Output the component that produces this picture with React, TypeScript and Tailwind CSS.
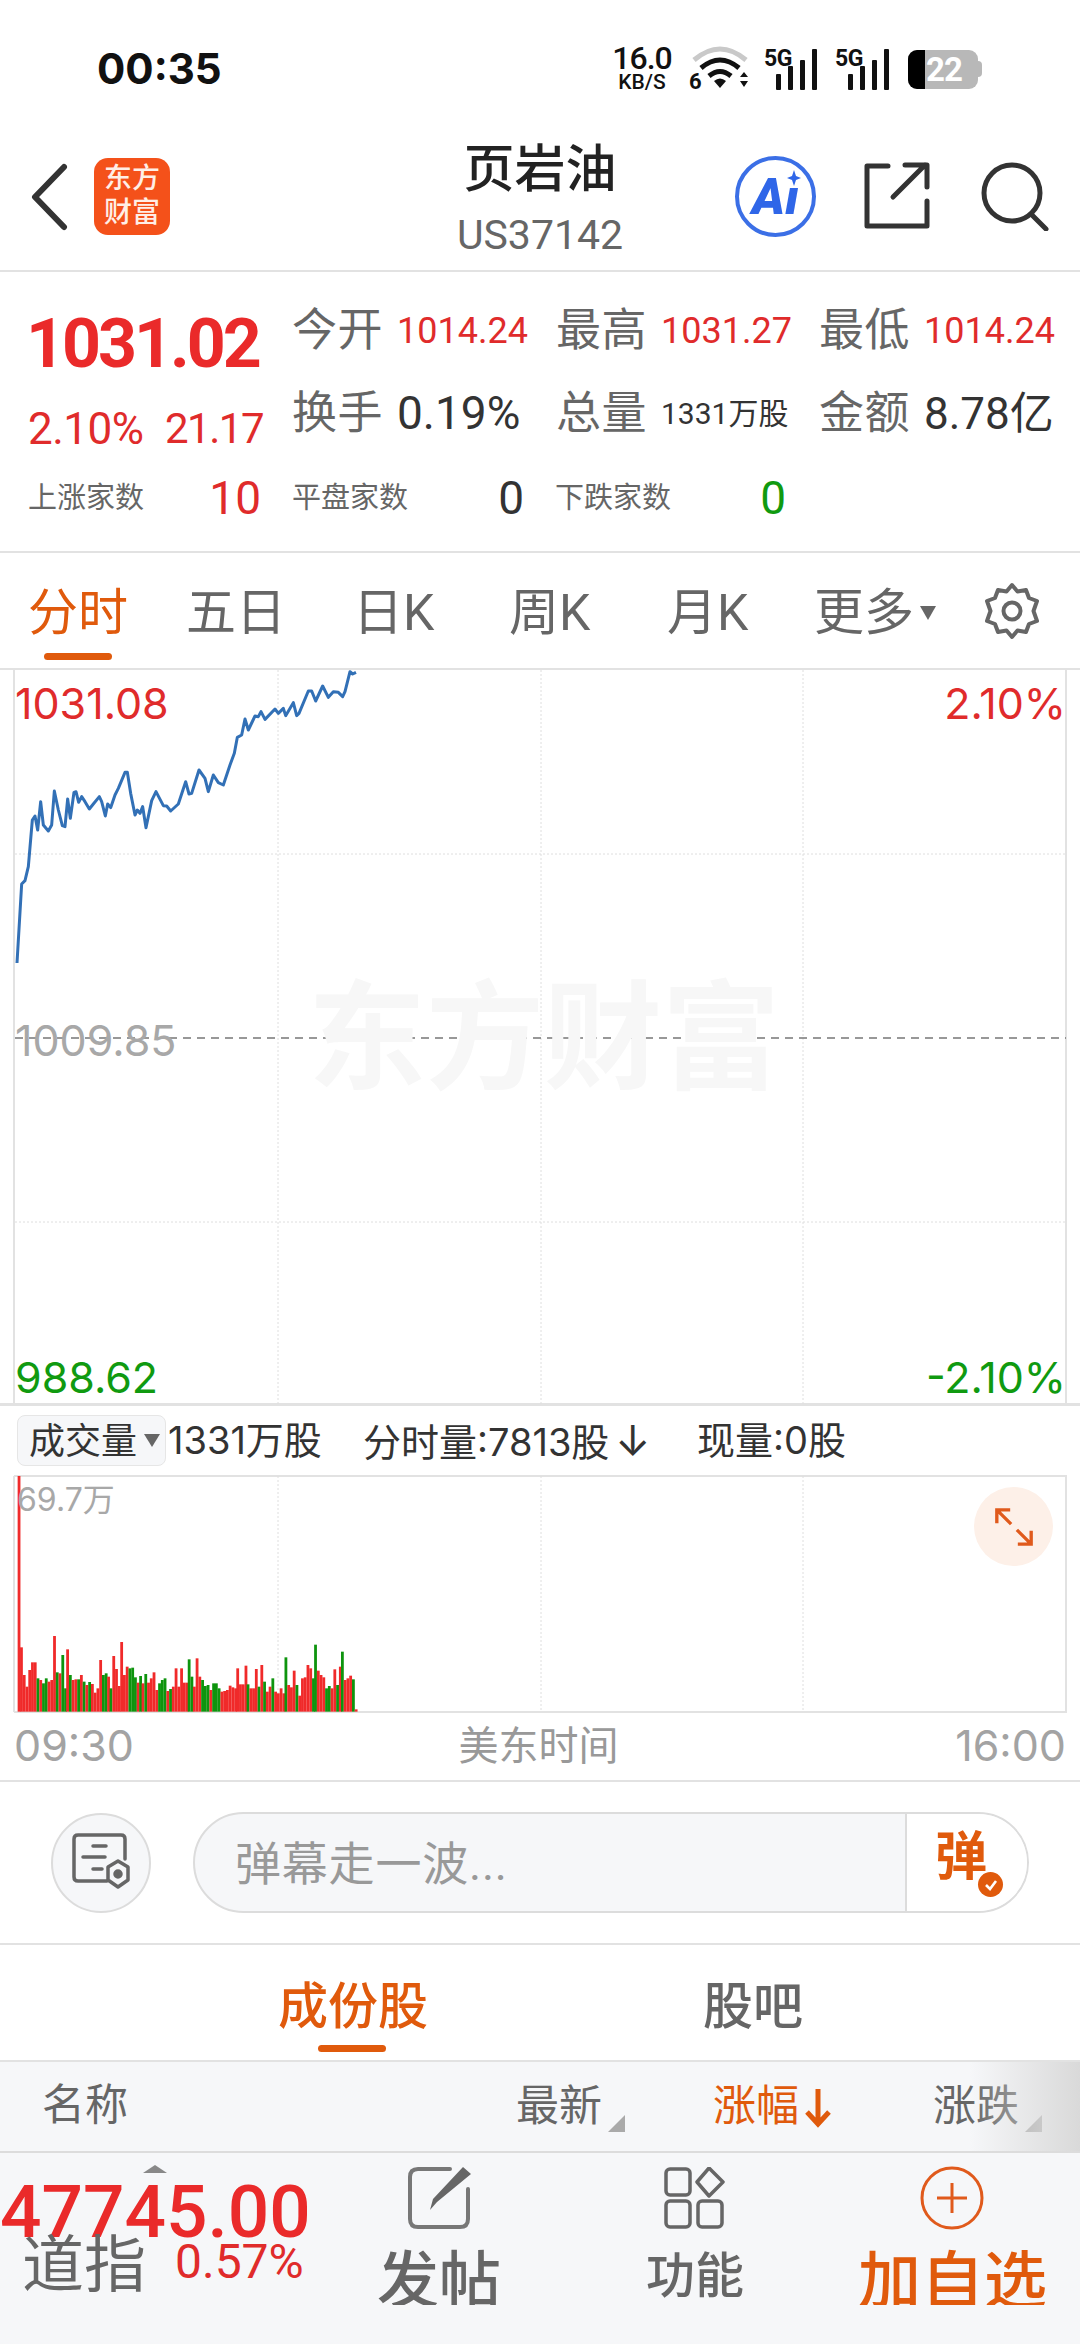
import React from 'react';

const cjk = { fontFamily: 'Roboto, "Noto Sans CJK SC", sans-serif' };
const interCjk = { fontFamily: 'Inter, "Noto Sans CJK SC", sans-serif' };

const linePts = [[50,905],[65,702],[75,692],[85,650],[97,510],[105,498],[113,540],[122,455],[130,525],[145,543],[155,525],[163,423],[175,480],[187,527],[195,530],[203,447],[211,505],[222,427],[228,425],[236,457],[245,440],[255,455],[268,477],[280,462],[298,440],[305,455],[316,498],[323,462],[332,473],[345,435],[355,415],[375,367],[382,367],[392,430],[405,495],[412,480],[420,490],[428,470],[438,533],[455,452],[468,425],[490,467],[500,468],[512,483],[535,462],[557,395],[567,432],[575,430],[597,360],[615,385],[625,425],[640,375],[655,398],[670,405],[690,345],[703,310],[712,262],[725,255],[735,207],[745,240],[765,198],[775,200],[783,185],[795,208],[825,177],[835,190],[850,175],[857,197],[880,158],[890,197],[897,190],[925,123],[935,123],[947,153],[968,108],[985,142],[1000,125],[1015,127],[1028,140],[1035,125],[1050,65],[1058,72],[1068,67]];
const linePath = [[17,963], ...linePts.slice(1).map(([x, y]) => [x / 3, 650 + y / 3])].map(p => p.join(',')).join(' ');

const bars: [number, number, string][] = [[55,348,'r'],[62,862,'r'],[70,945,'r'],[78,980,'r'],[86,930,'r'],[94,907,'r'],[102,907,'r'],[110,955,'g'],[118,960,'r'],[126,970,'g'],[134,955,'g'],[142,965,'r'],[150,960,'r'],[158,828,'r'],[166,937,'g'],[174,940,'r'],[182,885,'g'],[190,985,'g'],[196,868,'r'],[204,945,'g'],[212,960,'r'],[220,958,'r'],[228,958,'g'],[236,945,'r'],[244,965,'g'],[252,975,'r'],[260,966,'g'],[268,972,'r'],[276,998,'r'],[284,985,'r'],[292,900,'r'],[300,945,'g'],[308,940,'g'],[315,950,'r'],[322,985,'g'],[330,888,'r'],[338,927,'r'],[346,978,'r'],[353,846,'r'],[361,945,'r'],[369,920,'r'],[377,925,'g'],[385,923,'g'],[393,952,'g'],[401,968,'r'],[408,948,'g'],[415,970,'r'],[423,942,'g'],[431,968,'r'],[439,955,'r'],[447,937,'r'],[455,990,'r'],[463,970,'g'],[471,960,'g'],[479,955,'g'],[487,993,'r'],[495,987,'g'],[503,980,'r'],[511,925,'r'],[519,980,'r'],[527,925,'r'],[535,968,'r'],[543,968,'r'],[549,898,'g'],[557,950,'g'],[564,980,'r'],[572,895,'r'],[580,950,'r'],[588,960,'g'],[596,978,'g'],[604,975,'g'],[612,990,'r'],[620,970,'g'],[628,970,'g'],[636,985,'g'],[644,995,'r'],[652,993,'r'],[660,990,'r'],[668,977,'r'],[676,982,'r'],[684,985,'r'],[690,925,'r'],[698,973,'r'],[706,973,'r'],[714,917,'r'],[720,973,'g'],[728,985,'r'],[736,985,'r'],[744,927,'r'],[752,980,'g'],[760,915,'r'],[768,965,'g'],[776,995,'r'],[784,980,'r'],[792,955,'g'],[800,995,'r'],[808,1000,'r'],[816,985,'r'],[824,1000,'r'],[830,892,'g'],[838,975,'r'],[846,982,'r'],[854,932,'r'],[862,975,'g'],[870,1007,'r'],[878,955,'r'],[886,952,'r'],[894,915,'r'],[902,925,'r'],[910,955,'g'],[916,854,'g'],[924,932,'r'],[932,945,'r'],[940,952,'r'],[948,985,'g'],[956,978,'g'],[964,985,'r'],[972,928,'r'],[980,975,'g'],[988,920,'r'],[994,875,'g'],[1002,960,'r'],[1010,955,'r'],[1018,947,'r'],[1026,958,'g'],[1034,1048,'r']].map(([x, t, c]) => [x as number, t as number, c as string]);

function StatusBar() {
  return (
    <div className="h-[125px] relative">
      <div className="absolute left-[97px] top-[43px] text-[42px] leading-[52px] font-bold text-[#111]" style={{ fontFamily: 'Inter, sans-serif' }}>00:35</div>
      <div className="absolute left-[608px] top-[44px] w-[68px] text-center text-[32px] leading-[29px] font-medium text-[#111] tracking-[-1px]" style={{ fontFamily: 'Roboto' }}>16.0</div>
      <div className="absolute left-[608px] top-[73px] w-[68px] text-center text-[21px] leading-[18px] font-medium text-[#111]" style={{ fontFamily: 'Roboto' }}>KB/S</div>
      <div className="absolute left-[689px] top-[71px] text-[22px] leading-[22px] font-bold text-[#111]" style={{ fontFamily: 'Roboto' }}>6</div>
      <svg className="absolute left-[690px] top-[46px]" width="62" height="46" viewBox="0 0 62 46" fill="none">
        <path d="M4 14 Q30 -8 56 14" stroke="#c9c9c9" strokeWidth="5" />
        <path d="M11 22 Q30 6 49 22" stroke="#111" strokeWidth="5" />
        <path d="M19 30 Q30 21 41 30" stroke="#111" strokeWidth="5" />
        <path d="M24 35 L30 42 L36 35 Q30 30 24 35Z" fill="#111" />
        <path d="M50 31 L54 26 L58 31Z M50 35 L58 35 L54 41Z" fill="#111" />
      </svg>
      {[764, 835].map(x => (
        <div key={x} className="absolute top-[47px] text-[23px] leading-[24px] font-bold text-[#111] tracking-[-0.5px]" style={{ left: x, fontFamily: 'Roboto' }}>5G</div>
      ))}
      {[775, 847].map(x => (
        <svg key={x} className="absolute top-[48px]" style={{ left: x }} width="46" height="42" viewBox="0 0 46 42" fill="#111">
          <rect x="1" y="26" width="5" height="16" rx="1" />
          <rect x="13" y="18" width="5" height="24" rx="1" />
          <rect x="25" y="12" width="5" height="30" rx="1" />
          <rect x="37" y="1" width="5" height="41" rx="1" />
        </svg>
      ))}
      <div className="absolute left-[908px] top-[50px] w-[70px] h-[39px] rounded-[9px] bg-[#b8b8b8] overflow-hidden flex">
        <div className="w-[17px] h-full bg-black" />
        <div className="text-white font-bold text-[33px] leading-[39px] ml-[1px] tracking-[-1px]" style={{ fontFamily: 'Roboto' }}>22</div>
      </div>
      <div className="absolute left-[978px] top-[61px] w-[4px] h-[16px] rounded-r bg-[#b8b8b8]" />
    </div>
  );
}

function Header() {
  return (
    <div className="h-[147px] relative border-b-2 border-[#e2e2e2]">
      <svg className="absolute left-[28px] top-[38px]" width="44" height="68" viewBox="0 0 44 68" fill="none" stroke="#333" strokeWidth="6" strokeLinecap="round" strokeLinejoin="round">
        <path d="M36 4 L7 34 L36 64" />
      </svg>
      <div className="absolute left-[94px] top-[33px] w-[76px] h-[77px] rounded-[14px] bg-[#f4511a] text-[#ffeee6] text-[28px] leading-[34px] text-center font-medium pt-[4px]" style={cjk}>
        <div>东方</div>
        <div>财富</div>
      </div>
      <div className="absolute left-0 right-0 top-[16px] text-center text-[51px] leading-[58px] font-medium text-[#222]" style={cjk}>页岩油</div>
      <div className="absolute left-0 right-0 top-[87px] text-center text-[41px] leading-[46px] text-[#666]" style={{ fontFamily: 'Roboto' }}>US37142</div>
      <div className="absolute left-[735px] top-[31px] w-[81px] h-[81px] rounded-full border-[4px] border-[#3b6fe6] flex items-center justify-center text-[#2f66e8] text-[50px] font-black italic" style={{ fontFamily: 'Roboto' }}>
        <span className="mt-[2px]">Aı</span>
        <svg className="absolute left-[48px] top-[10px]" width="14" height="16" viewBox="0 0 14 16" fill="#2f66e8"><path d="M7 0 L9 6 L14 8 L9 10 L7 16 L5 10 L0 8 L5 6Z" /></svg>
      </div>
      <svg className="absolute left-[862px] top-[36px]" width="70" height="70" viewBox="0 0 70 70" fill="none" stroke="#333" strokeWidth="5" strokeLinecap="round" strokeLinejoin="round">
        <path d="M26 5 H5 V65 H65 V40" />
        <path d="M31 36 L63 4 M43 4 H65 V26" />
      </svg>
      <svg className="absolute left-[980px] top-[36px]" width="70" height="70" viewBox="0 0 70 70" fill="none" stroke="#333" strokeWidth="5" strokeLinecap="round">
        <ellipse cx="32" cy="32" rx="28" ry="28" />
        <path d="M52 54 L66 68" />
      </svg>
    </div>
  );
}

function Stat({ label, value, color, size }: { label: string; value: string; color: string; size: string }) {
  return (
    <div className="flex items-center">
      <span className="text-[45px] text-[#666] w-[105px] shrink-0 tracking-[0.5px]" style={cjk}>{label}</span>
      <span className={`${size} ${color} whitespace-nowrap`} style={cjk}>{value}</span>
    </div>
  );
}

function CountCell({ label, value, color }: { label: string; value: string; color: string }) {
  return (
    <div className="flex items-center justify-between">
      <span className="text-[29px] text-[#666]" style={cjk}>{label}</span>
      <span className={`text-[46px] ${color}`} style={{ fontFamily: 'Roboto' }}>{value}</span>
    </div>
  );
}

function Stats() {
  return (
    <div className="h-[281px] border-b-2 border-[#e2e2e2]">
      <div className="flex h-[192px]">
        <div className="w-[292px] pl-[28px]">
          <div className="mt-[32px] -ml-[2px] h-[80px] text-[68px] leading-[80px] font-bold text-[#ea2a2a] tracking-[-3px]" style={{ fontFamily: 'Roboto' }}>1031.02</div>
          <div className="mt-[20px] w-[235px] flex justify-between items-center leading-[50px] text-[#e02b2b]" style={{ fontFamily: 'Roboto' }}>
            <span className="text-[44px] tracking-[-0.5px]">2.10%</span>
            <span className="text-[42px] tracking-[-1.5px]">21.17</span>
          </div>
        </div>
        <div className="flex-1 pt-[17px] grid grid-cols-[264px_263px_1fr] auto-rows-[83px]">
          <Stat label="今开" value="1014.24" color="text-[#e02b2b]" size="text-[36px]" />
          <Stat label="最高" value="1031.27" color="text-[#e02b2b]" size="text-[36px]" />
          <Stat label="最低" value="1014.24" color="text-[#e02b2b]" size="text-[36px]" />
          <Stat label="换手" value="0.19%" color="text-[#333]" size="text-[46px]" />
          <Stat label="总量" value="1331万股" color="text-[#333]" size="text-[30px]" />
          <Stat label="金额" value="8.78亿" color="text-[#333]" size="text-[44px]" />
        </div>
      </div>
      <div className="pl-[28px] grid grid-cols-[233px_232px_231px] gap-x-[31px] h-[54px]">
        <CountCell label="上涨家数" value="10" color="text-[#e02b2b]" />
        <CountCell label="平盘家数" value="0" color="text-[#333]" />
        <CountCell label="下跌家数" value="0" color="text-[#109a10]" />
      </div>
    </div>
  );
}

function Tabs() {
  const items: [string, string][] = [['五日', 'w-[93px] ml-[58px]'], ['日K', 'w-[76px] ml-[74px]'], ['周K', 'w-[80px] ml-[80px]'], ['月K', 'w-[80px] ml-[78px]'], ['更多', 'w-[96px] ml-[67px]']];
  return (
    <div className="h-[117px] border-b-2 border-[#e2e2e2] relative flex pl-[28px] pt-[28px] text-[50px] leading-[64px] text-[#666]" style={cjk}>
      <span className="text-[#e05a0c] w-[100px]">分时</span>
      {items.map(([t, c]) => <span key={t} className={`${c} whitespace-nowrap`}>{t}</span>)}
      <span className="ml-[10px] mt-[25px] w-0 h-0 border-x-[8px] border-x-transparent border-t-[14px] border-t-[#666]" />
      <svg className="absolute left-[982px] top-[28px]" width="60" height="60" viewBox="0 0 24 24" fill="none" stroke="#666" strokeWidth="1.6" strokeLinejoin="round">
        <path d="M12 1.6 L14.2 4.2 17.6 3.6 18.8 6.8 22 8 20.6 12 22 16 18.8 17.2 17.6 20.4 14.2 19.8 12 22.4 9.8 19.8 6.4 20.4 5.2 17.2 2 16 3.4 12 2 8 5.2 6.8 6.4 3.6 9.8 4.2Z" />
        <circle cx="12" cy="12" r="3.4" />
      </svg>
      <div className="absolute left-[44px] top-[100px] w-[68px] h-[7px] rounded-full bg-[#e05a0c]" />
    </div>
  );
}

function PriceChart() {
  return (
    <div className="h-[736px] relative border-b-[3px] border-[#e2e2e2]" style={{ fontFamily: 'Inter, sans-serif' }}>
      <svg className="absolute left-0 top-0" width="1080" height="735" viewBox="0 670 1080 735" fill="none">
        <path d="M14 670 V1405 M1066 670 V1405" stroke="#e2e2e2" strokeWidth="2" />
        <path d="M15 854 H1066 M15 1222 H1066 M278 670 V1405 M541 670 V1405 M803 670 V1405" stroke="#dedede" strokeWidth="1" strokeDasharray="2 2" />
        <path d="M15 1038 H1066" stroke="#777" strokeWidth="1.5" strokeDasharray="8 6" />
        <polyline points={linePath} stroke="#3270b6" strokeWidth="3" strokeLinejoin="round" />
      </svg>
      <div className="absolute left-[308px] top-[308px] text-[118px] leading-[124px] font-bold text-[#f7f7f7] whitespace-nowrap" style={cjk}>东方财富</div>
      <div className="absolute left-[15px] top-[8px] text-[43px] leading-[50px] text-[#e02b2b]">1031.08</div>
      <div className="absolute right-[14px] top-[8px] text-[43px] leading-[50px] text-[#e02b2b]">2.10%</div>
      <div className="absolute left-[15px] top-[345px] text-[43px] leading-[50px] text-[#a8a8a8]">1009.85</div>
      <div className="absolute left-[15px] top-[682px] text-[43px] leading-[50px] text-[#109a10]">988.62</div>
      <div className="absolute right-[14px] top-[682px] text-[43px] leading-[50px] text-[#109a10]">-2.10%</div>
    </div>
  );
}

function VolumeHeader() {
  return (
    <div className="h-[69px] flex items-center pl-[17px] text-[38px] text-[#333] whitespace-nowrap" style={interCjk}>
      <div className="w-[149px] h-[51px] rounded-[8px] border border-[#e6e6e6] bg-[#f6f7f9] flex items-center pl-[11px] text-[36px]">
        <span>成交量</span>
        <span className="ml-[7px] w-0 h-0 border-x-[8px] border-x-transparent border-t-[13px] border-t-[#666]" />
      </div>
      <span className="ml-[2px] w-[195px]">1331万股</span>
      <span className="w-[334px]">分时量:7813股<span className="ml-[6px] text-[42px]">↓</span></span>
      <span>现量:0股</span>
    </div>
  );
}

function VolumeChart() {
  return (
    <div className="h-[238px] relative">
      <svg className="absolute left-0 top-0" width="1080" height="238" viewBox="0 1475 1080 238" fill="none">
        <path d="M14 1476 H1067 M14 1712 H1067" stroke="#e2e2e2" strokeWidth="2" />
        <path d="M14 1476 V1712 M1066 1476 V1712" stroke="#e2e2e2" strokeWidth="2" />
        <path d="M278 1476 V1712 M541 1476 V1712 M803 1476 V1712" stroke="#dedede" strokeWidth="1" strokeDasharray="2 2" />
        {bars.map(([x, t, c]) => (
          <rect key={x} x={x / 2.904 - 1.3} y={1360 + t / 3} width="2.8" height={(1055 - t) / 3} fill={c === 'r' ? '#f02a2a' : '#0e940e'} />
        ))}
      </svg>
      <div className="absolute left-[17px] top-[6px] text-[32px] leading-[38px] text-[#a8a8a8]" style={interCjk}>69.7万</div>
      <div className="absolute left-[974px] top-[12px] w-[79px] h-[79px] rounded-full bg-[#fdf0e8] flex items-center justify-center">
        <svg width="42" height="42" viewBox="0 0 44 44" fill="none" stroke="#e05a1c" strokeWidth="3.5">
          <path d="M4 18 V4 H18 M4 4 L19 19 M40 26 V40 H26 M40 40 L25 25" />
        </svg>
      </div>
    </div>
  );
}

function TimeAxis() {
  return (
    <div className="h-[69px] border-b-2 border-[#e2e2e2] flex items-center justify-between pl-[14px] pr-[14px] pb-[2px] text-[#a3a3a3]" style={interCjk}>
      <span className="text-[43px]">09:30</span>
      <span className="text-[40px] text-[#999] -ml-[12px]">美东时间</span>
      <span className="text-[43px]">16:00</span>
    </div>
  );
}

function DanmuRow() {
  return (
    <div className="h-[163px] border-b-2 border-[#e2e2e2] flex items-center pl-[51px]">
      <div className="w-[100px] h-[100px] rounded-full border-2 border-[#dcdcdc] bg-[#f6f7f9] flex items-center justify-center">
        <svg width="64" height="64" viewBox="0 0 64 64" fill="none" stroke="#666" strokeWidth="3.5" strokeLinecap="round" strokeLinejoin="round">
          <path d="M38 50 H9 Q5 50 5 46 V8 Q5 4 9 4 H52 Q56 4 56 8 V28" />
          <path d="M24 15 H37 M14 26 H36 M24 38 H33" />
          <path d="M49 30 L59 36 V49 L49 56 L39 49 V36Z" />
          <circle cx="49" cy="43" r="3" fill="#666" />
        </svg>
      </div>
      <div className="ml-[42px] w-[836px] h-[101px] rounded-full border-2 border-[#dcdcdc] bg-[#f6f7f9] flex overflow-hidden">
        <div className="flex-1 flex items-center pl-[40px] pt-[3px] text-[46px] text-[#999] tracking-[0.8px]" style={cjk}>弹幕走一波...</div>
        <div className="w-[122px] border-l-2 border-[#dcdcdc] bg-white relative">
          <span className="absolute left-[28px] top-[14px] text-[52px] leading-[60px] font-bold text-[#e05a0c]" style={cjk}>弹</span>
          <div className="absolute left-[71px] top-[58px] w-[25px] h-[25px] rounded-full bg-[#e05a0c] flex items-center justify-center">
            <svg width="16" height="16" viewBox="0 0 16 16" fill="none" stroke="#fff" strokeWidth="2.6"><path d="M3 8 L7 12 L13 4" /></svg>
          </div>
        </div>
      </div>
    </div>
  );
}

function SubTabs() {
  return (
    <div className="h-[117px] border-b-2 border-[#e2e2e2] relative text-[50px] leading-[64px]" style={cjk}>
      <span className="absolute left-[278px] top-[30px] text-[#e05a0c] font-medium">成份股</span>
      <span className="absolute left-[703px] top-[30px] text-[#666] font-medium">股吧</span>
      <div className="absolute left-[318px] top-[100px] w-[68px] h-[7px] rounded-full bg-[#e05a0c]" />
    </div>
  );
}

function Corner() {
  return <span className="w-0 h-0 border-l-[17px] border-l-transparent border-b-[17px] border-b-[#aaa] self-end mb-[19px] ml-[6px]" />;
}

function TableHeader() {
  return (
    <div className="h-[91px] border-b-2 border-[#dcdcdc] bg-[#f6f7f9] relative text-[43px] text-[#666] flex items-center" style={cjk}>
      <span className="ml-[42px] w-[474px] -mt-[2px]">名称</span>
      <span>最新</span>
      <Corner />
      <span className="ml-[88px] text-[#e05a0c]">涨幅</span>
      <svg className="ml-[2px]" width="34" height="44" viewBox="0 0 34 44" fill="none" stroke="#e05a0c" strokeWidth="5">
        <path d="M17 4 V38 M6 27 L17 39 L28 27" />
      </svg>
      <span className="ml-[98px]">涨跌</span>
      <Corner />
      <div className="absolute right-0 top-0 bottom-0 w-[110px] bg-gradient-to-r from-transparent to-[#d9d9d9]" />
    </div>
  );
}

function BottomBar() {
  return (
    <div className="flex-1 bg-[#f6f7f9] relative overflow-hidden">
      <div className="absolute left-[143px] top-[12px] w-0 h-0 border-x-[12px] border-x-transparent border-b-[8px] border-b-[#888]" />
      <div className="absolute left-0 top-[19px] text-[73px] leading-[80px] text-[#ea2a2a] font-medium" style={{ fontFamily: 'Roboto' }}>47745.00</div>
      <div className="absolute left-[22px] top-[75px] text-[62px] leading-[76px] text-[#666]" style={cjk}>道指</div>
      <div className="absolute left-[175px] top-[84px] text-[48px] leading-[50px] text-[#e02b2b]" style={{ fontFamily: 'Roboto' }}>0.57%</div>

      <svg className="absolute left-[406px] top-[12px]" width="68" height="68" viewBox="0 0 68 68" fill="none" stroke="#777" strokeWidth="4" strokeLinecap="round" strokeLinejoin="round">
        <path d="M44 4 H12 Q4 4 4 12 V54 Q4 62 12 62 H54 Q62 62 62 54 V24" />
        <path d="M57 2 L65 9 L31 37 L24 45 L27 34Z" fill="#666" stroke="none" />
      </svg>
      <div className="absolute left-[377px] top-[93px] h-[59px] overflow-hidden text-[62px] leading-[72px] font-medium text-[#666]" style={cjk}>发帖</div>

      <svg className="absolute left-[664px] top-[14px]" width="62" height="62" viewBox="0 0 62 62" fill="none" stroke="#666" strokeWidth="3.5" strokeLinejoin="round">
        <rect x="2" y="2" width="24" height="26" rx="4" />
        <path d="M45 1 L59 15 L45 29 L33 15Z" />
        <rect x="2" y="34" width="24" height="26" rx="4" />
        <rect x="34" y="34" width="24" height="26" rx="4" />
      </svg>
      <div className="absolute left-[646px] top-[91px] text-[49px] leading-[66px] font-medium text-[#666]" style={cjk}>功能</div>

      <svg className="absolute left-[920px] top-[13px]" width="64" height="64" viewBox="0 0 64 64" fill="none" stroke="#e05a1c" strokeWidth="3">
        <circle cx="32" cy="32" r="30" />
        <path d="M32 17 V47 M17 32 H47" />
      </svg>
      <div className="absolute left-[858px] top-[93px] h-[59px] overflow-hidden text-[63px] leading-[72px] font-medium text-[#e05a0c]" style={cjk}>加自选</div>
    </div>
  );
}

export default function App() {
  return (
    <div className="w-[1080px] h-[2344px] bg-white flex flex-col overflow-hidden">
      <StatusBar />
      <Header />
      <Stats />
      <Tabs />
      <PriceChart />
      <VolumeHeader />
      <VolumeChart />
      <TimeAxis />
      <DanmuRow />
      <SubTabs />
      <TableHeader />
      <BottomBar />
    </div>
  );
}
